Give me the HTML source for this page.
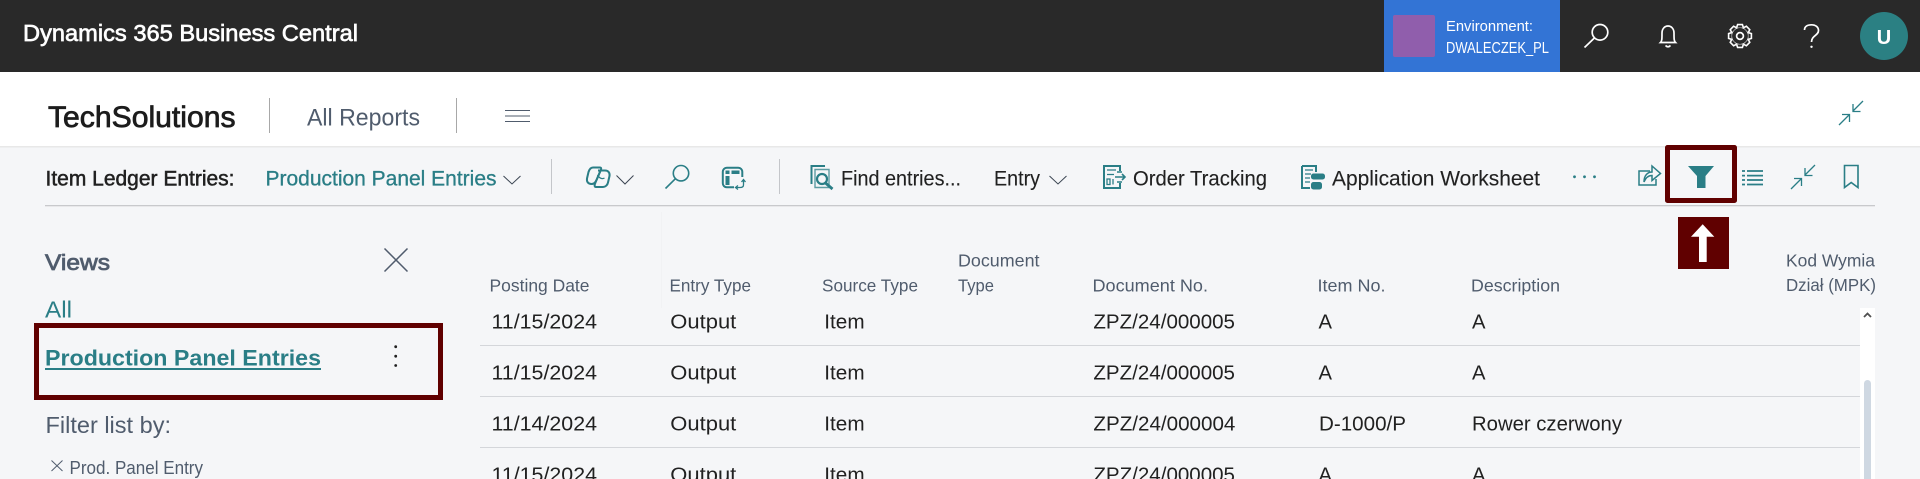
<!DOCTYPE html>
<html lang="en">
<head>
<meta charset="utf-8">
<title>Item Ledger Entries</title>
<style>
html,body{margin:0;padding:0;width:1920px;height:479px;overflow:hidden;background:#f5f6f8}
svg{display:block}
text{font-family:"Liberation Sans",Arial,sans-serif;white-space:pre}
.h{font-size:17.5px;fill:#505c6d}
.r{font-size:20.5px;fill:#212121}
.t{fill:none;stroke:#2a7e86;stroke-width:1.6}
.th{fill:none;stroke:#2a7e86;stroke-width:1.3}
.w{fill:none;stroke:#fff;stroke-width:1.7}
</style>
</head>
<body>
<svg width="1920" height="479" viewBox="0 0 1920 479" xmlns="http://www.w3.org/2000/svg">
<defs><clipPath id="tc"><rect x="0" y="240" width="1875" height="239"/></clipPath></defs>
<rect width="1920" height="479" fill="#f5f6f8"/>

<!-- top bar -->
<rect width="1920" height="72" fill="#292929"/>
<text x="23" y="41" font-size="23" fill="#fff" stroke="#fff" stroke-width=".65" textLength="335" lengthAdjust="spacingAndGlyphs">Dynamics 365 Business Central</text>
<rect x="1384" y="0" width="176" height="72" fill="#3374d5"/>
<rect x="1393" y="15" width="42" height="42" rx="2" fill="#905eac"/>
<text x="1446" y="31" font-size="15" fill="#fff" textLength="87" lengthAdjust="spacingAndGlyphs">Environment:</text>
<text x="1446" y="53" font-size="15.5" fill="#fff" textLength="103" lengthAdjust="spacingAndGlyphs">DWALECZEK_PL</text>
<circle cx="1600" cy="32.3" r="7.8" class="w"/><path d="M1594.4 38 L1584.5 47.5" class="w"/>
<path d="M1660.5 42.5 C1662 41 1662 39 1662 33 C1662 29 1664.5 26 1668 26 C1671.5 26 1674 29 1674 33 C1674 39 1674 41 1675.5 42.5 Z" class="w"/>
<path d="M1665.5 45.5 Q1668 48 1670.5 45.5" class="w"/>
<g transform="translate(1740 36)">
<circle r="8.8" class="w"/><circle r="3.4" class="w"/>
<g fill="#292929" stroke="#fff" stroke-width="1.6">
<path d="M-3.4 -8.4 L-2.4 -11.4 H2.4 L3.4 -8.4"/>
<path transform="rotate(45)" d="M-3.4 -8.4 L-2.4 -11.4 H2.4 L3.4 -8.4"/>
<path transform="rotate(90)" d="M-3.4 -8.4 L-2.4 -11.4 H2.4 L3.4 -8.4"/>
<path transform="rotate(135)" d="M-3.4 -8.4 L-2.4 -11.4 H2.4 L3.4 -8.4"/>
<path transform="rotate(180)" d="M-3.4 -8.4 L-2.4 -11.4 H2.4 L3.4 -8.4"/>
<path transform="rotate(225)" d="M-3.4 -8.4 L-2.4 -11.4 H2.4 L3.4 -8.4"/>
<path transform="rotate(270)" d="M-3.4 -8.4 L-2.4 -11.4 H2.4 L3.4 -8.4"/>
<path transform="rotate(315)" d="M-3.4 -8.4 L-2.4 -11.4 H2.4 L3.4 -8.4"/>
</g>
</g>
<path d="M1804.5 30 C1804.5 26.5 1807.5 24.8 1811.5 24.8 C1815.5 24.8 1818.5 27 1818.5 30.5 C1818.5 35.5 1811.5 35.5 1811.5 42" class="w"/>
<circle cx="1811.5" cy="46.8" r="1.2" fill="#fff"/>
<circle cx="1884" cy="36" r="24" fill="#2b8083"/>
<text x="1884" y="44" font-size="20" font-weight="700" fill="#fff" text-anchor="middle">U</text>

<!-- title band -->
<rect y="72" width="1920" height="75" fill="#fff"/>
<rect y="146" width="1920" height="1.5" fill="#e8e8e8"/>
<text x="48" y="127" font-size="29.5" fill="#1c1c1c" stroke="#1c1c1c" stroke-width=".75" textLength="187.5" lengthAdjust="spacingAndGlyphs">TechSolutions</text>
<rect x="269" y="98" width="1" height="35" fill="#a8a8a8"/>
<text x="307" y="125.5" font-size="24.5" fill="#505c6d" textLength="113" lengthAdjust="spacingAndGlyphs">All Reports</text>
<rect x="456" y="98" width="1" height="35" fill="#a8a8a8"/>
<path d="M505 110.5 H530 M505 116 H530 M505 121.5 H530" fill="none" stroke="#505c6d" stroke-width="1"/>
<path d="M1863 101 L1853 111 M1853 104 V111.5 H1860.5 M1839 125 L1849 115 M1842 114.5 H1849.5 V122" class="th"/>

<!-- toolbar -->
<text x="45.5" y="185.5" font-size="21" fill="#212121" stroke="#212121" stroke-width=".5" textLength="189" lengthAdjust="spacingAndGlyphs">Item Ledger Entries:</text>
<text x="265.5" y="185.5" font-size="21" fill="#2a7e86" stroke="#2a7e86" stroke-width=".3" textLength="231" lengthAdjust="spacingAndGlyphs">Production Panel Entries</text>
<path d="M503.5 176 L512 184 L520.5 176" fill="none" stroke="#3b4552" stroke-width="1"/>
<rect x="551" y="159" width="1" height="35" fill="#c4c6ca"/>
<path d="M593 167.5 H600 C602 167.5 601 170 600 172 L596 181 C595 183 593.5 184 591.5 184 C588 184 586.5 181.5 587 178.5 L588.5 172 C589.5 169 591 167.5 593 167.5 Z" fill="none" stroke="#2a7e86" stroke-width="2"/>
<path d="M598 170.5 H605 C608.5 170.5 610 173 609.5 176 L608 182.5 C607.5 185 605.5 187 603 187 H596 C594 187 594.5 184.5 595.5 182.5 L599.5 173 C600.5 171 599.5 170.5 598 170.5 Z" fill="none" stroke="#2a7e86" stroke-width="2"/>
<path d="M597.5 175 C599 178 602 179.5 604.5 178" class="th"/>
<path d="M616.5 175.5 L625 184 L633.5 175.5" fill="none" stroke="#3b4552" stroke-width="1"/>
<circle cx="681" cy="173.2" r="7.7" class="t"/><path d="M675.3 178.8 L665.5 188.5" class="t"/>
<rect x="722.8" y="167.8" width="19.5" height="19.5" rx="4" fill="none" stroke="#2a7e86" stroke-width="2"/>
<rect x="725.5" y="170.5" width="4" height="3.5" fill="#2a7e86"/>
<rect x="731.5" y="170.5" width="8" height="3.5" fill="#2a7e86"/>
<rect x="725.5" y="176" width="4" height="9" fill="#2a7e86"/>
<rect x="734" y="177" width="11" height="13" fill="#f5f6f8"/>
<path d="M743.5 180 V185 Q743.5 187.5 740 187.5 H736 M741.5 182 L743.5 179.5 L745.5 182 M738 185.5 L735.5 187.5 L738 189.5" class="th"/>
<rect x="779" y="159" width="1" height="35" fill="#c4c6ca"/>

<path d="M811.5 184 V166 H825" fill="none" stroke="#2a7e86" stroke-width="2"/>
<path d="M815 187.5 V169.5 H829 V187.5 Z" fill="none" stroke="#2a7e86" stroke-width="1.4" stroke-opacity=".75"/>
<circle cx="822" cy="179" r="5" fill="#f5f6f8" stroke="#2a7e86" stroke-width="2.2"/>
<path d="M825.5 183 L832.5 189" fill="none" stroke="#2a7e86" stroke-width="2.8"/>
<text x="841" y="185.5" font-size="21" fill="#212121" stroke="#212121" stroke-width=".1" textLength="120" lengthAdjust="spacingAndGlyphs">Find entries...</text>
<text x="994" y="185.5" font-size="21" fill="#212121" stroke="#212121" stroke-width=".1" textLength="46" lengthAdjust="spacingAndGlyphs">Entry</text>
<path d="M1049.5 176 L1058 184 L1066.5 176" fill="none" stroke="#3b4552" stroke-width="1"/>

<path d="M1113 166 H1104 V188 H1120 V183 M1113 166 H1120 V171" fill="none" stroke="#2a7e86" stroke-width="2"/>
<path d="M1107 170 H1116 M1107 174.5 H1114 M1107 179 H1110 V184.5 H1107 Z M1113 179 V184.5" class="th"/>
<path d="M1115 177 H1125 M1122 174 L1125 177 L1122 180 M1117 172 H1122 M1117 182 H1122" class="t"/>
<text x="1133" y="185.5" font-size="21" fill="#212121" stroke="#212121" stroke-width=".1" textLength="134" lengthAdjust="spacingAndGlyphs">Order Tracking</text>

<path d="M1302 166 H1316 V172 M1302 166 V188 H1310" fill="none" stroke="#2a7e86" stroke-width="2"/>
<path d="M1305 170 H1313 M1305 174 H1311 M1305 178 H1310 M1305 182 H1310" class="th"/>
<rect x="1311" y="173.5" width="14" height="6" rx="2.5" fill="#2a7e86"/>
<rect x="1311" y="182" width="11" height="7.5" rx="2.5" fill="#2a7e86"/>
<text x="1332" y="185.5" font-size="21" fill="#212121" stroke="#212121" stroke-width=".1" textLength="208" lengthAdjust="spacingAndGlyphs">Application Worksheet</text>

<circle cx="1574.5" cy="176.8" r="1.4" fill="#2a7e86"/><circle cx="1584.5" cy="176.8" r="1.4" fill="#2a7e86"/><circle cx="1594.5" cy="176.8" r="1.4" fill="#2a7e86"/>
<path d="M1650 171 H1639 V185 H1656 V179" fill="none" stroke="#2a7e86" stroke-width="1.5"/>
<path d="M1644 182 C1644 175 1648 172 1652 172 V166 L1660.5 173.5 L1652 180.5 V175.5 C1649 175.5 1646 177 1644 182 Z" fill="none" stroke="#2a7e86" stroke-width="1.5"/>

<rect x="1667.5" y="147.5" width="67" height="53" fill="none" stroke="#600000" stroke-width="5" stroke-linejoin="round"/>
<path d="M1688 166 H1714 L1705.5 176 V188 H1697 V176 Z" fill="#2a7e86"/>
<path d="M1747 171 H1763 M1747 175.6 H1763 M1747 180 H1763 M1747 184.5 H1763 M1742 171 H1745 M1742 175.6 H1745 M1742 180 H1745 M1742 184.5 H1745" fill="none" stroke="#2a7e86" stroke-width="1.7"/>
<path d="M1815 165 L1805 175 M1805 168 V175.5 H1812.5 M1791 189 L1801 179 M1794 178.5 H1801.5 V186" class="th"/>
<path d="M1844.5 165.5 H1858 V187.5 L1851.2 182.5 L1844.5 187.5 Z" class="t"/>
<rect x="45" y="205" width="1830" height="1.3" fill="#c8c9cc"/>

<!-- annotation arrow -->
<rect x="1678" y="217" width="51" height="52" fill="#600000"/>
<path d="M1702.7 224.3 L1714.3 236.7 H1706.7 V262 H1699 V236.7 H1691 Z" fill="#fff"/>

<!-- views pane -->
<text x="45" y="270" font-size="22.5" fill="#505c6d" stroke="#505c6d" stroke-width=".8" textLength="65" lengthAdjust="spacingAndGlyphs">Views</text>
<path d="M384.5 248.5 L407.5 271.5 M407.5 248.5 L384.5 271.5" fill="none" stroke="#505c6d" stroke-width="1.5"/>
<text x="45" y="317.5" font-size="23" fill="#2a7e86" textLength="27" lengthAdjust="spacingAndGlyphs">All</text>
<rect x="36.5" y="325.5" width="404" height="72" fill="none" stroke="#600000" stroke-width="5"/>
<text x="45" y="365.5" font-size="22.5" font-weight="700" fill="#2a7e86" textLength="276" lengthAdjust="spacingAndGlyphs">Production Panel Entries</text>
<rect x="45" y="368" width="276" height="2" fill="#2a7e86"/>
<circle cx="395.7" cy="346.7" r="1.4" fill="#212121"/><circle cx="395.7" cy="356.2" r="1.4" fill="#212121"/><circle cx="395.7" cy="365.5" r="1.4" fill="#212121"/>
<text x="45.5" y="433" font-size="23" fill="#505c6d" textLength="125.5" lengthAdjust="spacingAndGlyphs">Filter list by:</text>
<path d="M51.5 460.5 L62.5 471 M62.5 460.5 L51.5 471" fill="none" stroke="#505c6d" stroke-width="1"/>
<text x="69.5" y="474" font-size="18" fill="#505c6d" textLength="133.5" lengthAdjust="spacingAndGlyphs">Prod. Panel Entry</text>

<!-- table -->
<rect x="661" y="212" width="1" height="96" fill="#f1f2f4"/>
<g>
<text class="h" x="489.5" y="291.5" textLength="100" lengthAdjust="spacingAndGlyphs">Posting Date</text>
<text class="h" x="669.5" y="291.5" textLength="81.5" lengthAdjust="spacingAndGlyphs">Entry Type</text>
<text class="h" x="822" y="291.5" textLength="96" lengthAdjust="spacingAndGlyphs">Source Type</text>
<text class="h" x="958" y="266.5" textLength="81.5" lengthAdjust="spacingAndGlyphs">Document</text>
<text class="h" x="958" y="291.5" textLength="36" lengthAdjust="spacingAndGlyphs">Type</text>
<text class="h" x="1092.5" y="291.5" textLength="115.5" lengthAdjust="spacingAndGlyphs">Document No.</text>
<text class="h" x="1317.5" y="291.5" textLength="68" lengthAdjust="spacingAndGlyphs">Item No.</text>
<text class="h" x="1471" y="291.5" textLength="89" lengthAdjust="spacingAndGlyphs">Description</text>
<text class="h" x="1786" y="266.5" textLength="89" lengthAdjust="spacingAndGlyphs">Kod Wymia</text>
<text class="h" x="1786" y="291" textLength="90" lengthAdjust="spacingAndGlyphs">Dział (MPK)</text>
</g>
<g fill="#d4d6da">
<rect x="480" y="345" width="1380" height="1"/>
<rect x="480" y="396" width="1380" height="1"/>
<rect x="480" y="447" width="1380" height="1"/>
</g>
<g clip-path="url(#tc)">
<text class="r" x="491.5" y="328.3" textLength="105.5" lengthAdjust="spacingAndGlyphs">11/15/2024</text>
<text class="r" x="670.3" y="328.3" textLength="66" lengthAdjust="spacingAndGlyphs">Output</text>
<text class="r" x="824.3" y="328.3" textLength="40.3" lengthAdjust="spacingAndGlyphs">Item</text>
<text class="r" x="1093.4" y="328.3" textLength="141.6" lengthAdjust="spacingAndGlyphs">ZPZ/24/000005</text>
<text class="r" x="1318.5" y="328.3" textLength="13.5" lengthAdjust="spacingAndGlyphs">A</text>
<text class="r" x="1472" y="328.3" textLength="13.5" lengthAdjust="spacingAndGlyphs">A</text>

<text class="r" x="491.5" y="379.3" textLength="105.5" lengthAdjust="spacingAndGlyphs">11/15/2024</text>
<text class="r" x="670.3" y="379.3" textLength="66" lengthAdjust="spacingAndGlyphs">Output</text>
<text class="r" x="824.3" y="379.3" textLength="40.3" lengthAdjust="spacingAndGlyphs">Item</text>
<text class="r" x="1093.4" y="379.3" textLength="141.6" lengthAdjust="spacingAndGlyphs">ZPZ/24/000005</text>
<text class="r" x="1318.5" y="379.3" textLength="13.5" lengthAdjust="spacingAndGlyphs">A</text>
<text class="r" x="1472" y="379.3" textLength="13.5" lengthAdjust="spacingAndGlyphs">A</text>

<text class="r" x="491.5" y="430.3" textLength="105.5" lengthAdjust="spacingAndGlyphs">11/14/2024</text>
<text class="r" x="670.3" y="430.3" textLength="66" lengthAdjust="spacingAndGlyphs">Output</text>
<text class="r" x="824.3" y="430.3" textLength="40.3" lengthAdjust="spacingAndGlyphs">Item</text>
<text class="r" x="1093.4" y="430.3" textLength="142" lengthAdjust="spacingAndGlyphs">ZPZ/24/000004</text>
<text class="r" x="1319" y="430.3" textLength="87" lengthAdjust="spacingAndGlyphs">D-1000/P</text>
<text class="r" x="1472" y="430.3" textLength="150" lengthAdjust="spacingAndGlyphs">Rower czerwony</text>

<text class="r" x="491.5" y="481.3" textLength="105.5" lengthAdjust="spacingAndGlyphs">11/15/2024</text>
<text class="r" x="670.3" y="481.3" textLength="66" lengthAdjust="spacingAndGlyphs">Output</text>
<text class="r" x="824.3" y="481.3" textLength="40.3" lengthAdjust="spacingAndGlyphs">Item</text>
<text class="r" x="1093.4" y="481.3" textLength="141.6" lengthAdjust="spacingAndGlyphs">ZPZ/24/000005</text>
<text class="r" x="1318.5" y="481.3" textLength="13.5" lengthAdjust="spacingAndGlyphs">A</text>
<text class="r" x="1472" y="481.3" textLength="13.5" lengthAdjust="spacingAndGlyphs">A</text>
</g>

<!-- scrollbar -->
<rect x="1860" y="308" width="15" height="171" fill="#fff"/>
<path d="M1864 317 L1867.5 313.5 L1871 317" fill="none" stroke="#505050" stroke-width="1.8"/>
<path d="M1864 479 V383.5 A3.5 3.5 0 0 1 1871 383.5 V479 Z" fill="#cfd8e2"/>
</svg>
</body>
</html>
